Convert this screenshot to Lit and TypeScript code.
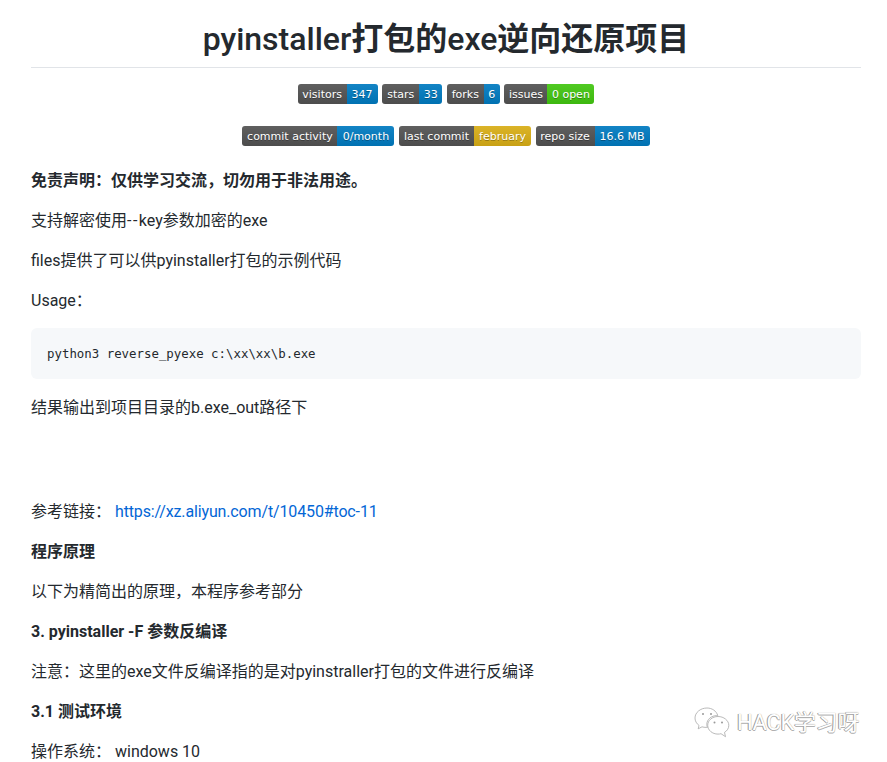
import { LitElement, html, css } from "lit";
import { customElement } from "lit/decorators.js";

type B = { l: string; v: string; lw: number; vw: number; c?: string };
const row1: B[] = [
  { l: "visitors", v: "347", lw: 49, vw: 31 },
  { l: "stars", v: "33", lw: 37, vw: 23 },
  { l: "forks", v: "6", lw: 37, vw: 16 },
  { l: "issues", v: "0 open", lw: 43, vw: 47, c: "green" },
];
const row2: B[] = [
  { l: "commit activity", v: "0/month", lw: 95, vw: 57 },
  { l: "last commit", v: "february", lw: 75, vw: 57, c: "yellow" },
  { l: "repo size", v: "16.6 MB", lw: 59, vw: 55 },
];

@customElement("app-root")
export class AppRoot extends LitElement {
  static styles = css`
    :host {
      display: block;
      height: 762px;
      overflow: hidden;
      position: relative;
      background: #fff;
      color: #24292e;
      font-family: Roboto, "Noto Sans CJK SC", sans-serif;
      font-size: 16px;
      line-height: 24px;
    }
    .page { padding: 0 26px 0 31px; }
    h1 {
      margin: 0;
      height: 68px;
      box-sizing: border-box;
      padding-top: 19px;
      border-bottom: 1px solid #e1e4e8;
      text-align: center;
      font-size: 32px;
      line-height: 40px;
      font-weight: 500;
    }
    h1 b { font-weight: 700; }
    .badges { display: flex; justify-content: center; gap: 4.6px; margin-top: 16px; }
    .badges + .badges { margin-top: 22px; }
    .badge {
      display: flex;
      height: 20px;
      border-radius: 3px;
      overflow: hidden;
      font-family: "DejaVu Sans", sans-serif;
      font-size: 11px;
      line-height: 22px;
      color: #fff;
      text-shadow: 0 1px 0 rgba(1, 1, 1, 0.3);
    }
    .badge span { display: block; text-align: center; white-space: nowrap; }
    .l { background: #555 linear-gradient(rgba(187, 187, 187, 0.1), rgba(0, 0, 0, 0.1)); }
    .v { background: #007ec6 linear-gradient(rgba(187, 187, 187, 0.1), rgba(0, 0, 0, 0.1)); }
    .v.green { background-color: #4c1; }
    .v.yellow { background-color: #dfb317; }
    p { margin: 14px 0 0; line-height: 26px; }
    .first { margin-top: 22px; }
    .after { margin-top: 16px; }
    .wide { letter-spacing: 1.5px; }
    strong { font-weight: 700; }
    pre {
      margin: 14px 0 0;
      height: 51px;
      box-sizing: border-box;
      padding: 16px;
      border-radius: 6px;
      background: #f6f8fa;
      font-family: "DejaVu Sans Mono", monospace;
      font-size: 12.4px;
      line-height: 19px;
      color: #24292e;
    }
    .blank { height: 50px; }
    a { color: #0366d6; text-decoration: none; letter-spacing: -0.14px; }
    .mark {
      position: absolute;
      left: 694px;
      top: 704px;
      display: flex;
      align-items: center;
      gap: 7px;
      color: #fff;
      font-size: 22px;
      line-height: 36px;
      letter-spacing: -0.3px;
      text-shadow: -1px 0 0 #9a9a9a, 0 1px 0 #b0b0b0, 0 0 1px #888;
    }
    .mark span { padding-top: 1px; }
    .mark svg { display: block; }
  `;

  private badge(b: B) {
    return html`<div class="badge">
      <span class="l" style="width:${b.lw}px">${b.l}</span>
      <span class="v ${b.c ?? ""}" style="width:${b.vw}px">${b.v}</span>
    </div>`;
  }

  render() {
    return html`
      <div class="page">
        <h1>pyinstaller<b>打包的</b>exe<b>逆向还原项目</b></h1>
        <div class="badges">${row1.map((b) => this.badge(b))}</div>
        <div class="badges">${row2.map((b) => this.badge(b))}</div>
        <p class="first"><strong>免责声明：仅供学习交流，切勿用于非法用途。</strong></p>
        <p>支持解密使用<span class="wide">--</span>key参数加密的exe</p>
        <p>files提供了可以供pyinstaller打包的示例代码</p>
        <p>Usage：</p>
        <pre>python3 reverse_pyexe c:\\xx\\xx\\b.exe</pre>
        <p class="after">结果输出到项目目录的b.exe_out路径下</p>
        <p class="blank"></p>
        <p>参考链接： <a href="#">https://xz.aliyun.com/t/10450#toc-11</a></p>
        <p><strong>程序原理</strong></p>
        <p>以下为精简出的原理，本程序参考部分</p>
        <p><strong>3. pyinstaller -F 参数反编译</strong></p>
        <p>注意：这里的exe文件反编译指的是对pyinstraller打包的文件进行反编译</p>
        <p><strong>3.1 测试环境</strong></p>
        <p>操作系统： windows 10</p>
      </div>
      <div class="mark">
        <svg width="36" height="32" viewBox="0 0 36 32" fill="#fff" stroke="#a8a8a8" stroke-width="0.8">
          <path d="M13 1C6.500 1 1 5.500 1 11c0 3 1.500 5.600 4 7.400l-.8 3.400 3.800-2c1.300.4 2.700.6 4.200.6h1.200c-.4-1-.6-2-.6-3 0-5 4.600-8.800 10-8.800h1C22.500 4 18 1 13 1z"/>
          <path d="M24 9.500c-5.700 0-10.300 3.900-10.300 8.800s4.600 8.800 10.300 8.800c1 0 2-.1 3-.4l4.500 3-1-4.300c2.700-1.600 4.300-4.200 4.300-7.100 0-4.900-5.100-8.800-10.800-8.800z"/>
          <circle cx="9" cy="7" r="1" fill="#999" stroke="none"/>
          <circle cx="17" cy="7" r="1" fill="#999" stroke="none"/>
          <circle cx="20.500" cy="15.500" r="1" fill="#999" stroke="none"/>
          <circle cx="28" cy="15.500" r="1" fill="#999" stroke="none"/>
        </svg>
        <span>HACK学习呀</span>
      </div>
    `;
  }
}
